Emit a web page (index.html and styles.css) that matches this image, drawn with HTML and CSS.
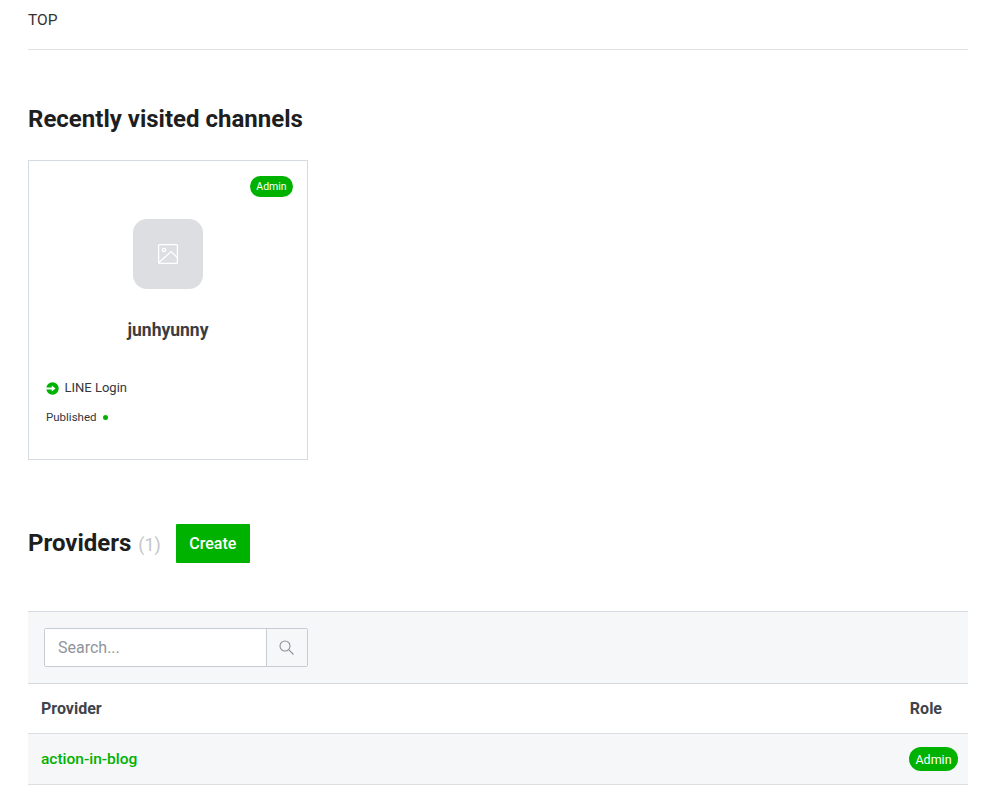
FILE: index.html
```html
<!DOCTYPE html>
<html lang="en">
<head>
<meta charset="utf-8">
<title>TOP</title>
<link rel="stylesheet" href="styles.css">
</head>
<body>
<main class="page">
  <div class="crumb">TOP</div>
  <h2 class="heading recent-heading">Recently visited channels</h2>
  <article class="card">
    <span class="badge card-badge">Admin</span>
    <div class="thumb">
      <svg width="22" height="22" viewBox="0 0 22 22" fill="none" stroke="#fff" stroke-width="1.3">
        <rect x="1.6" y="1.6" width="18.8" height="18.8" rx="1"/>
        <circle cx="7" cy="7" r="1.6"/>
        <path d="M2 19.6 14 8.6l6 5.6"/>
      </svg>
    </div>
    <h3 class="card-name">junhyunny</h3>
    <div class="channel-type">
      <svg class="line-icon" width="13" height="13" viewBox="0 0 13 13">
        <circle cx="6.500" cy="6.500" r="6.200" fill="#00b200"/>
        <path fill="#fff" d="M0 5.400h5.800V3.400l3.700 3.100-3.700 3.100V7.600H0z"/>
      </svg>
      <span>LINE Login</span>
    </div>
    <div class="status"><span>Published</span><i class="dot"></i></div>
  </article>
  <div class="providers-head">
    <h2 class="heading">Providers <span class="count">(1)</span></h2>
    <button class="create" type="button">Create</button>
  </div>
  <section class="table">
    <div class="toolbar">
      <div class="search">
        <input class="search-input" type="text" placeholder="Search...">
        <button class="search-btn" type="button" aria-label="Search">
          <svg width="16" height="16" viewBox="0 0 16 16" fill="none" stroke="#8b9099" stroke-width="1.1">
            <circle cx="6" cy="6" r="5"/>
            <path d="M9.700 9.700 14.500 14.500"/>
          </svg>
        </button>
      </div>
    </div>
    <div class="row head-row"><span>Provider</span><span class="role-head">Role</span></div>
    <div class="row body-row"><a class="provider-link" href="#">action-in-blog</a><span class="badge table-badge">Admin</span></div>
  </section>
</main>
</body>
</html>
```
FILE: styles.css
```css
* { box-sizing: border-box; }
html, body { margin: 0; padding: 0; background: #fff; }
body { font-family: Roboto, "Liberation Sans", sans-serif; color: #1e1e1e; height: 802px; overflow: hidden; }
.page { padding: 0 22px 0 28px; }
.crumb { height: 50px; border-bottom: 1px solid #dfe1e5; padding-top: 11px; font-size: 15.500px; line-height: 18px; color: #333; }
.heading { margin: 0; font-size: 24px; line-height: 30px; font-weight: 700; color: #1e1e1e; }
.recent-heading { margin-top: 54px; }
.card { position: relative; width: 280px; height: 300px; margin-top: 26px; border: 1px solid #d5dae0; padding: 58px 17px 0; }
.badge { display: inline-flex; align-items: center; justify-content: center; background: #00b200; color: #fff; border-radius: 12px; }
.card-badge { position: absolute; top: 15px; right: 14px; width: 43px; height: 21px; font-size: 10.500px; }
.thumb { width: 70px; height: 70px; margin: 0 auto; border-radius: 14px; background: #dcdee2; display: flex; align-items: center; justify-content: center; }
.card-name { margin: 29px 0 0; text-align: center; font-size: 17.500px; line-height: 24px; font-weight: 700; color: #3a3d42; }
.channel-type { display: flex; align-items: center; gap: 5.500px; margin-top: 37px; font-size: 13px; line-height: 18px; color: #33373d; }
.status { display: flex; align-items: center; gap: 6px; margin-top: 11px; font-size: 11.500px; line-height: 18px; color: #33373d; }
.dot { width: 5px; height: 5px; border-radius: 50%; background: #00b200; }
.providers-head { display: flex; align-items: center; gap: 15px; margin-top: 64px; height: 39px; }
.count { font-size: 18px; font-weight: 400; color: #c4c6ca; margin-left: 1px; }
.create { width: 74px; height: 39px; border: 0; border-radius: 1px; background: #00b200; color: #fff; font: 500 16px Roboto, sans-serif; padding: 0; }
.table { margin-top: 48px; border-top: 1px solid #d5dae0; }
.toolbar { height: 72px; padding: 16px; background: #f6f7f9; border-bottom: 1px solid #d5dae0; }
.search { display: flex; width: 264px; height: 39px; border: 1px solid #c6ccd4; border-radius: 2px; }
.search-input { flex: 1; min-width: 0; border: 0; outline: 0; padding: 0 13px; font: 16px Roboto, sans-serif; background: #fff; }
.search-input::placeholder { color: #8f949b; opacity: 1; }
.search-btn { width: 41px; border: 0; border-left: 1px solid #c6ccd4; background: #f6f7f9; padding: 0; display: flex; align-items: center; justify-content: center; }
.row { display: flex; align-items: center; justify-content: space-between; border-bottom: 1px solid #dcdee2; }
.head-row { height: 50px; padding: 0 26px 0 13px; font-size: 16px; font-weight: 700; color: #3f444c; }
.body-row { height: 51px; padding: 0 10px 0 13px; background: #f6f7f9; }
.provider-link { color: #00b200; font-size: 15.500px; font-weight: 500; text-decoration: none; }
.table-badge { width: 49px; height: 24px; font-size: 12.500px; }
```
